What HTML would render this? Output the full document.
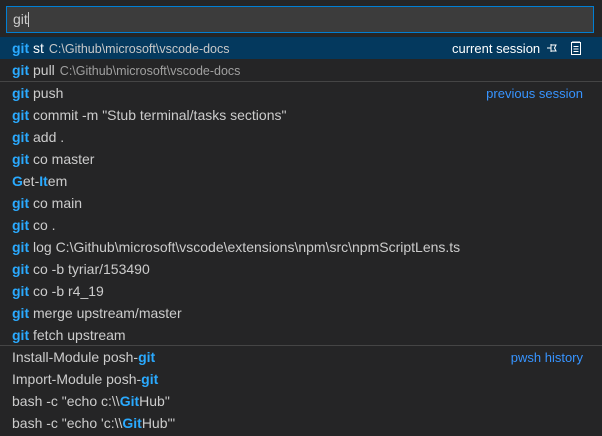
<!DOCTYPE html><html><head><style>
body{margin:0;width:602px;height:436px;background:#252526;font-family:"Liberation Sans",sans-serif;font-size:14px;color:#cccccc;overflow:hidden;position:relative}
.inp{position:absolute;left:6px;top:6px;width:586px;height:25px;background:#3c3c3c;border:1px solid #007fd4;}
.inp .v{position:absolute;left:6px;top:4px;color:#cccccc;white-space:nowrap}
.cur{display:inline-block;width:1px;height:15px;background:#ccc;vertical-align:-3px}
.row{position:absolute;left:0;width:602px;height:22px;line-height:23px}
.row .t{position:absolute;left:12px;white-space:nowrap}
b{color:#2aaaff;font-weight:bold}
.d{color:#a0a0a0;font-size:12.5px;margin-left:5px}
.r{position:absolute;right:19px;color:#3794ff;font-size:13px}
.sep{position:absolute;left:0;width:602px;height:1px;background:#454545}
.sel{background:#04395e;color:#fff}
</style></head><body>
<div class="inp"><div class="v">git<span class="cur"></span></div></div>
<div class="row sel" style="top:37px"><span class="t"><b>git</b> st<span class="d" style="color:#c8c8c8">C:\Github\microsoft\vscode-docs</span></span>
<span style="position:absolute;left:452px;color:#fff;font-size:13px">current session</span>
<svg style="position:absolute;left:546px;top:4px" width="16" height="14" viewBox="0 0 16 14" fill="none" stroke="#fff" stroke-width="1"><path d="M1 7h4M5 3v8M5 4h5l-1.5 3 1.5 3H5"/></svg>
<svg style="position:absolute;left:570px;top:3px" width="12" height="16" viewBox="0 0 12 16" fill="none" stroke="#fff" stroke-width="1"><rect x="1.5" y="2.5" width="9" height="12"/><path d="M3.5 6.5h5M3.5 9h5M3.5 11.5h5M3 1v2M5 1v2M7 1v2M9 1v2"/></svg></div>
<div class="row" style="top:59px"><span class="t"><b>git</b> pull<span class="d">C:\Github\microsoft\vscode-docs</span></span></div>
<div class="sep" style="top:81px"></div>
<div class="row" style="top:82px"><span class="t"><b>git</b> push</span><span class="r">previous session</span></div>
<div class="row" style="top:104px"><span class="t"><b>git</b> commit -m "Stub terminal/tasks sections"</span></div>
<div class="row" style="top:126px"><span class="t"><b>git</b> add .</span></div>
<div class="row" style="top:148px"><span class="t"><b>git</b> co master</span></div>
<div class="row" style="top:170px"><span class="t"><b>G</b>et-<b>It</b>em</span></div>
<div class="row" style="top:192px"><span class="t"><b>git</b> co main</span></div>
<div class="row" style="top:214px"><span class="t"><b>git</b> co .</span></div>
<div class="row" style="top:236px"><span class="t"><b>git</b> log C:\Github\microsoft\vscode\extensions\npm\src\npmScriptLens.ts</span></div>
<div class="row" style="top:258px"><span class="t"><b>git</b> co -b tyriar/153490</span></div>
<div class="row" style="top:280px"><span class="t"><b>git</b> co -b r4_19</span></div>
<div class="row" style="top:302px"><span class="t"><b>git</b> merge upstream/master</span></div>
<div class="row" style="top:324px"><span class="t"><b>git</b> fetch upstream</span></div>
<div class="sep" style="top:345px"></div>
<div class="row" style="top:346px"><span class="t">Install-Module posh-<b>git</b></span><span class="r">pwsh history</span></div>
<div class="row" style="top:368px"><span class="t">Import-Module posh-<b>git</b></span></div>
<div class="row" style="top:390px"><span class="t">bash -c "echo c:\\<b>Git</b>Hub"</span></div>
<div class="row" style="top:412px"><span class="t">bash -c "echo 'c:\\<b>Git</b>Hub'"</span></div>
</body></html>
